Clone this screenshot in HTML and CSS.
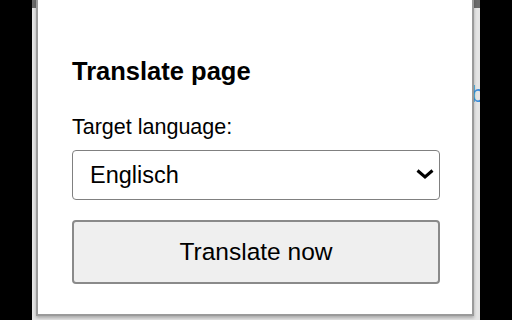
FILE: index.html
```html
<!DOCTYPE html>
<html>
<head>
<meta name="viewport" content="width=device-width, initial-scale=1">
<title>Translate page</title>
<link rel="stylesheet" href="styles.css">
</head>
<body>
<div class="page">
   <!-- page behind the popup -->
   <div class="page-bar"></div>
   <div class="page-link">b</div>

   <!-- popup -->
   <div class="popup">
      <h2 class="popup-title">Translate page</h2>
      <label class="field-label" for="targetLang">Target language:</label>
      <div class="select-wrap">
         <select id="targetLang" class="lang-select">
            <option>Englisch</option>
            <option>Deutsch</option>
            <option>Französisch</option>
         </select>
         <svg class="chevron" viewBox="0 0 18 10" width="18" height="10">
            <path d="M1.5 1.5 L9 8 L16.5 1.5" fill="none" stroke="#000" stroke-width="3"/>
         </svg>
      </div>
      <button class="translate-btn">Translate now</button>
   </div>
</div>
</body>
</html>
```

FILE: styles.css
```css
html,
body {
   margin: 0;
   padding: 0;
   width: 512px;
   height: 320px;
   overflow: hidden;
   background: #000;
   font-family: "Liberation Sans", Arial, sans-serif;
}

.page {
   position: relative;
   margin-left: 32px;
   width: 448px;
   height: 320px;
   background: #e4e4e4;
   overflow: hidden;
}

.page-bar {
   height: 8px;
   background: #6a6a6a;
}

.page-link {
   position: absolute;
   right: -4px;
   top: 80px;
   font-size: 24px;
   color: #3b8fd9;
}

.popup {
   position: absolute;
   left: 4px;
   top: -2px;
   width: 438px;
   height: 318px;
   box-sizing: border-box;
   padding: 57px 32px 0 34px;
   background: #fff;
   border: 2px solid #9a9a9a;
   box-shadow: 0 2px 3px rgba(0, 0, 0, 0.25);
}

.popup-title {
   margin: 0 0 29px 0;
   font-size: 25.5px;
   line-height: 29px;
   font-weight: bold;
   color: #000;
}

.field-label {
   display: block;
   margin-bottom: 11px;
   font-size: 21.5px;
   line-height: 24px;
   color: #000;
}

.select-wrap {
   position: relative;
   margin-bottom: 20px;
}

.lang-select {
   display: block;
   width: 100%;
   height: 50px;
   margin: 0;
   padding: 0 0 0 17px;
   box-sizing: border-box;
   -webkit-appearance: none;
   appearance: none;
   background: #fff;
   border: 1px solid #808080;
   border-radius: 4px;
   font-family: "Liberation Sans", Arial, sans-serif;
   font-size: 23.5px;
   color: #000;
}

.chevron {
   position: absolute;
   right: 6px;
   top: 19px;
   pointer-events: none;
}

.translate-btn {
   display: block;
   width: 100%;
   height: 64px;
   margin: 0;
   box-sizing: border-box;
   background: #efefef;
   border: 2px solid #8a8a8a;
   border-radius: 4px;
   font-family: "Liberation Sans", Arial, sans-serif;
   font-size: 24.5px;
   color: #000;
   cursor: pointer;
}
```
